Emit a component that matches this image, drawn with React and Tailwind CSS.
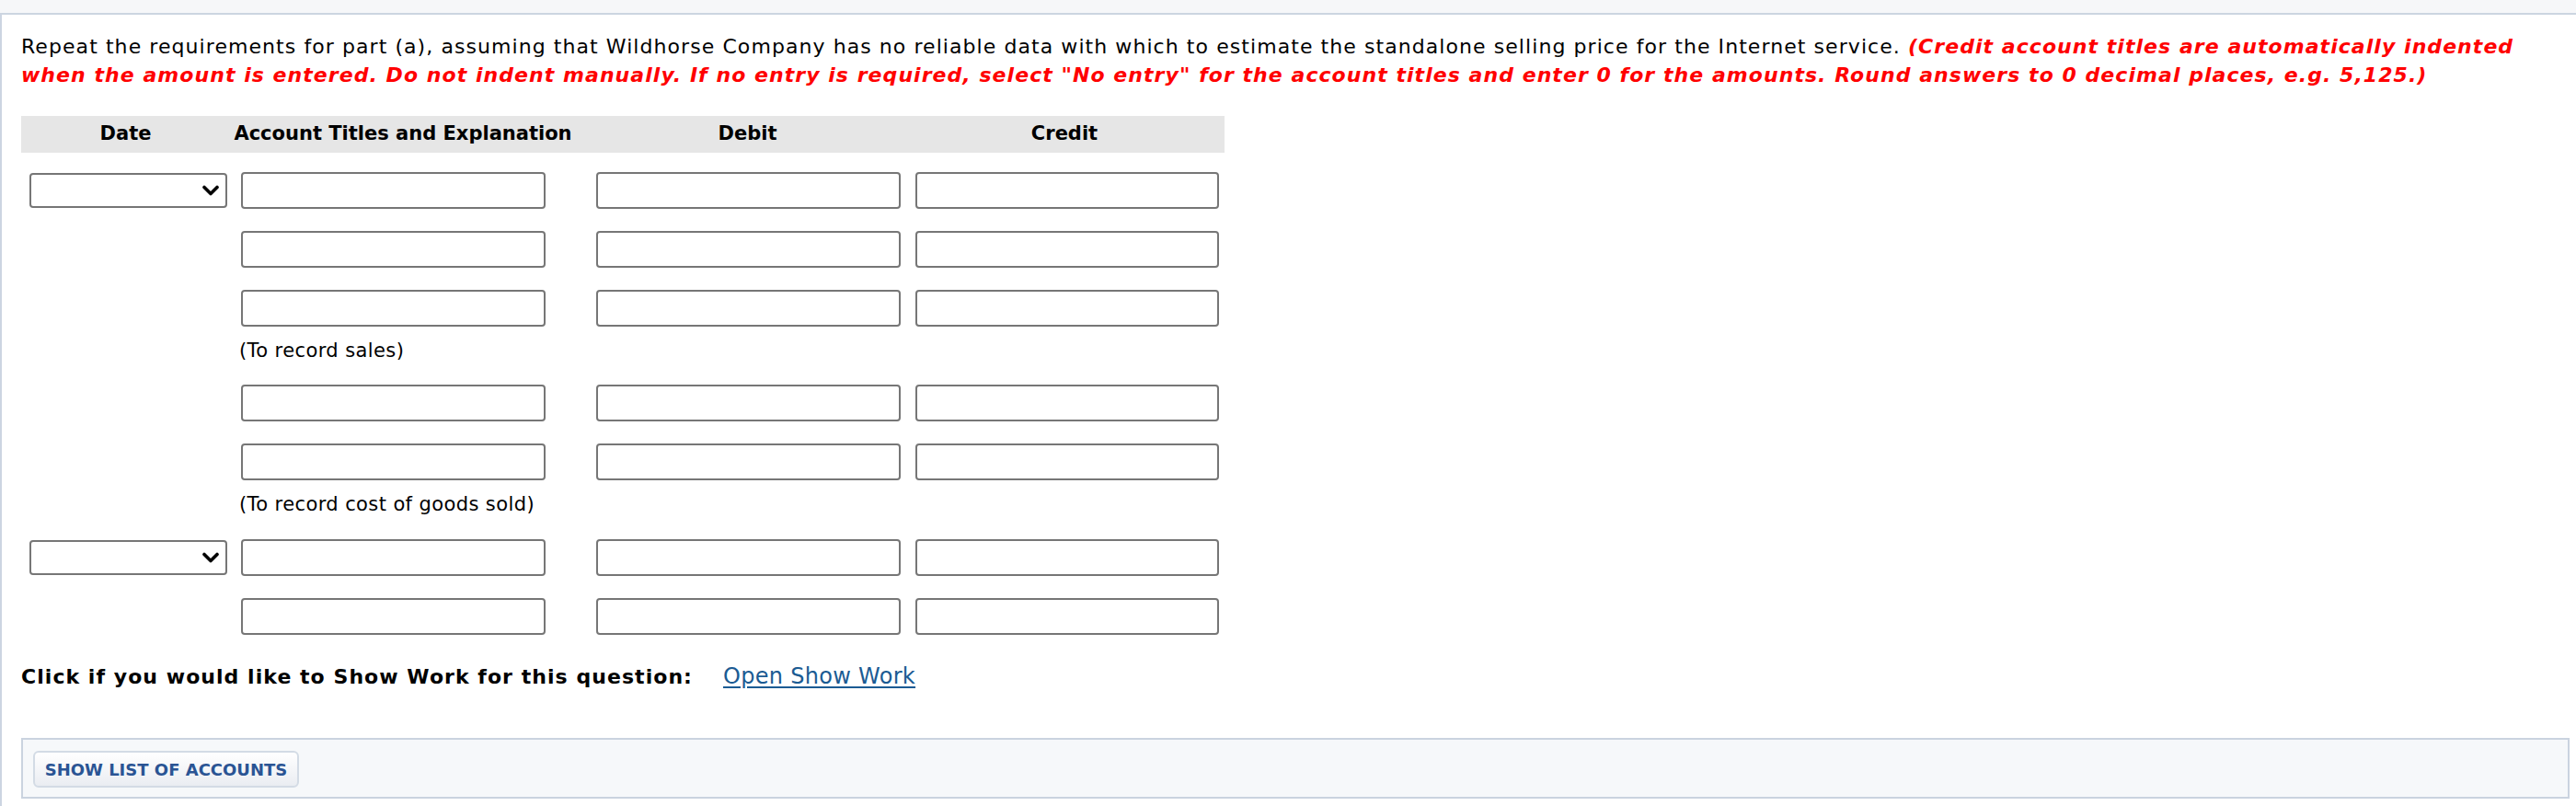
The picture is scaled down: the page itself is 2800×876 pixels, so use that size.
import React from "react";

const cols = "grid grid-cols-[231px_384px_349px_344px] items-center";

function DateSelect() {
  return (
    <div className="ml-[9px] flex h-[38px] w-[215px] items-center justify-end rounded-[4px] border-2 border-[#767676] bg-white pr-[6px]">
      <svg width="20" height="13" viewBox="0 0 20 13" aria-hidden="true">
        <polyline
          points="3,2.5 10,9.5 17,2.5"
          fill="none"
          stroke="#000"
          strokeWidth="3.6"
          strokeLinecap="round"
          strokeLinejoin="round"
        />
      </svg>
    </div>
  );
}

function Field({ className }) {
  return (
    <input
      type="text"
      className={
        "h-[40px] rounded-[4px] border-2 border-[#767676] bg-white outline-none " +
        className
      }
    />
  );
}

function EntryRow({ withDate }) {
  return (
    <div className={cols + " h-[64px]"}>
      <div>{withDate && <DateSelect />}</div>
      <div>
        <Field className="ml-[8px] w-[331px]" />
      </div>
      <div>
        <Field className="ml-[10px] w-[331px]" />
      </div>
      <div>
        <Field className="ml-[8px] w-[330px]" />
      </div>
    </div>
  );
}

function Note({ text, h }) {
  return (
    <div className={cols + " " + h}>
      <div />
      <p className="self-start pl-[6px] text-[21px] leading-[28px] tracking-[0.4px] text-black">
        {text}
      </p>
    </div>
  );
}

export default function App() {
  return (
    <div className="min-h-[876px] bg-white font-['DejaVu_Sans',Verdana,sans-serif] text-black">
      <div className="h-[14px] bg-[#f6f7f9]" />
      <div className="border-l-2 border-t-2 border-[#ccd5e1] pb-[8px] pl-[21px] pr-[7px] pt-[19px]">
        <p className="pr-[30px] text-[22px] leading-[31px] tracking-[1.07px]">
          Repeat the requirements for part (a), assuming that Wildhorse Company
          has no reliable data with which to estimate the standalone selling
          price for the Internet service.{" "}
          <span className="font-bold italic tracking-[1.05px] text-[#ff0000]">
            (Credit account titles are automatically indented when the amount
            is entered. Do not indent manually. If no entry is required, select
            "No entry" for the account titles and enter 0 for the amounts.
            Round answers to 0 decimal places, e.g. 5,125.)
          </span>
        </p>

        <div className="mt-[29px] w-[1308px]">
          <div className={cols + " h-[40px] bg-[#e6e6e6] text-[21px] font-bold"}>
            <div className="pr-[4px] text-center">Date</div>
            <div className="pr-[16px] text-center">
              Account Titles and Explanation
            </div>
            <div className="text-center">Debit</div>
            <div className="pr-[4px] text-center">Credit</div>
          </div>

          <div className="mt-[9px]">
            <EntryRow withDate />
            <EntryRow />
            <EntryRow />
            <Note text="(To record sales)" h="h-[39px]" />
            <EntryRow />
            <EntryRow />
            <Note text="(To record cost of goods sold)" h="h-[40px]" />
            <EntryRow withDate />
            <EntryRow />
          </div>
        </div>

        <div className="mt-[18px] flex h-[30px] items-baseline leading-[30px]">
          <span className="text-[22px] font-bold tracking-[1.05px]">
            Click if you would like to Show Work for this question:
          </span>
          <a
            href="#"
            className="ml-[33px] text-[24px] tracking-[0.3px] text-[#1b5b93] underline underline-offset-[3px]"
          >
            Open Show Work
          </a>
        </div>

        <div className="mt-[52px] h-[66px] border-2 border-[#cad3df] bg-[#f6f8fa] pl-[11px] pt-[12px]">
          <button
            type="button"
            className="flex h-[40px] w-[289px] items-center justify-center rounded-[6px] border-2 border-[#d3dbe5] bg-linear-to-b from-[#ffffff] to-[#eaedf2] text-[18px] font-bold text-[#2a5494]"
          >
            SHOW LIST OF ACCOUNTS
          </button>
        </div>
      </div>
    </div>
  );
}
